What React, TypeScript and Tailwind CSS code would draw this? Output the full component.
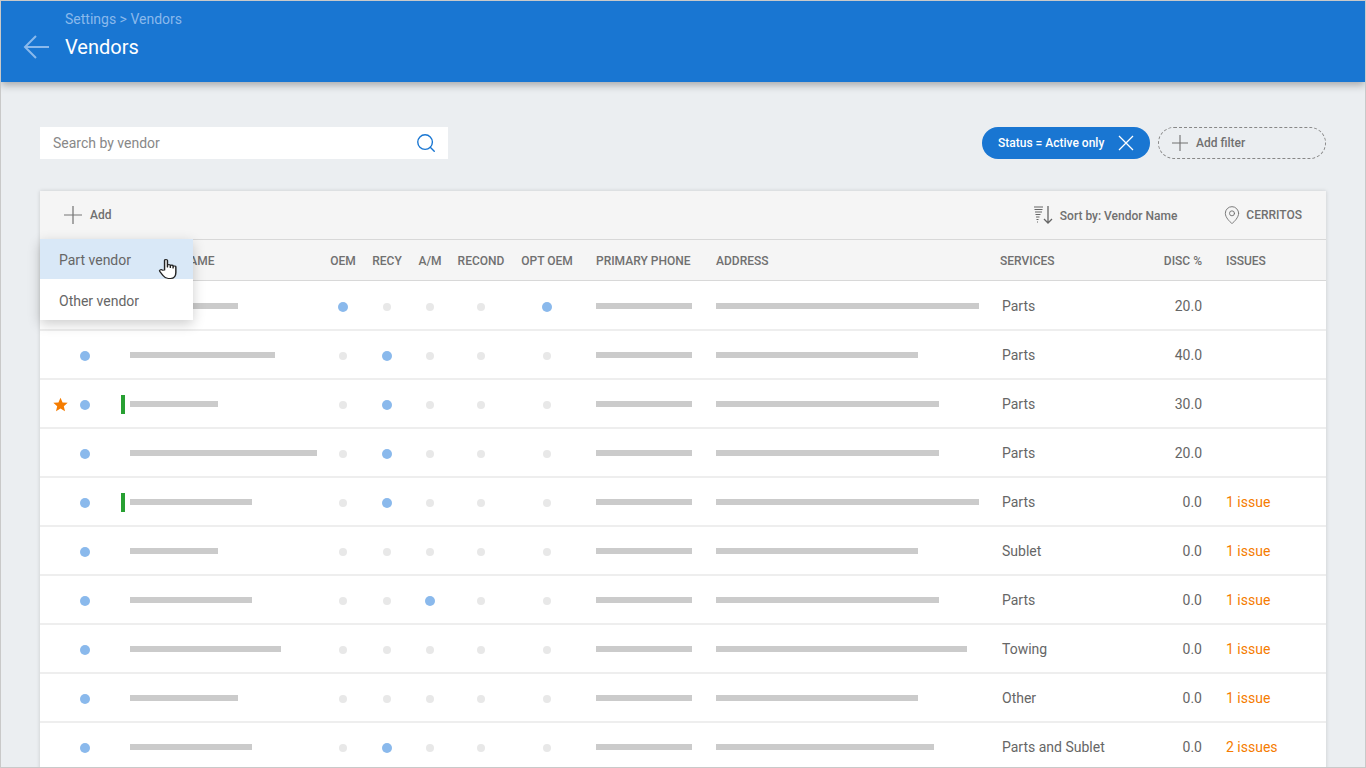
import { Search, MapPin } from "lucide-react"

interface Vendor {
  star?: boolean
  green?: boolean
  name: number
  addr: number
  on: string
  service: string
  disc: string
  issues?: string
}

const ROWS: Vendor[] = [
  { name: 108, addr: 263, on: "oem,opt", service: "Parts", disc: "20.0" },
  { name: 145, addr: 202, on: "recy", service: "Parts", disc: "40.0" },
  { star: true, green: true, name: 88, addr: 223, on: "recy", service: "Parts", disc: "30.0" },
  { name: 187, addr: 223, on: "recy", service: "Parts", disc: "20.0" },
  { green: true, name: 122, addr: 263, on: "recy", service: "Parts", disc: "0.0", issues: "1 issue" },
  { name: 88, addr: 202, on: "", service: "Sublet", disc: "0.0", issues: "1 issue" },
  { name: 122, addr: 223, on: "am", service: "Parts", disc: "0.0", issues: "1 issue" },
  { name: 151, addr: 251, on: "", service: "Towing", disc: "0.0", issues: "1 issue" },
  { name: 108, addr: 202, on: "", service: "Other", disc: "0.0", issues: "1 issue" },
  { name: 122, addr: 218, on: "recy", service: "Parts and Sublet", disc: "0.0", issues: "2 issues" },
]

const FLAGS = [
  { key: "oem", width: "w-[44px]" },
  { key: "recy", width: "w-[44px]" },
  { key: "am", width: "w-[42px]" },
  { key: "recond", width: "w-[60px]" },
  { key: "opt", width: "w-[72px]" },
]

function Dot({ on }: { on: boolean }) {
  return on ? (
    <span className="block h-[10px] w-[10px] rounded-full bg-[#8ab9ec]" />
  ) : (
    <span className="block h-[8px] w-[8px] rounded-full bg-[#e8e8e8]" />
  )
}

// plain thin cross, the artwork runs edge to edge
function PlusIcon({ size, className }: { size: number; className?: string }) {
  return (
    <svg width={size} height={size} viewBox="0 0 16 16" fill="none" stroke="currentColor" strokeWidth="1.100" className={className}>
      <path d="M8 0v16M0 8h16" />
    </svg>
  )
}

function CloseIcon({ className }: { className?: string }) {
  return (
    <svg width="16" height="16" viewBox="0 0 16 16" fill="none" stroke="currentColor" strokeWidth="1.300" className={className}>
      <path d="M1 1l14 14M15 1 1 15" />
    </svg>
  )
}

function SortIcon() {
  return (
    <svg width="20" height="20" viewBox="0 0 20 20" fill="none" stroke="#666" strokeWidth="1.200" className="ml-auto">
      <path d="M1 2h9M1.500 4.500h8M2 7h7M2.500 9.500h5M3 12h3.500M3.500 14.500h2M4 17h1" />
      <path d="M15 1v17M11 14l4 4 4-4" strokeWidth="1.300" />
    </svg>
  )
}

function HandCursor() {
  return (
    <svg width="21" height="22" viewBox="0 0 16 22" preserveAspectRatio="none" fill="#fff" stroke="#222" strokeWidth="1.100" strokeLinejoin="round">
      <path d="M5 12V2.600C5 1.100 7.200 1.100 7.200 2.600V9V7.400C7.200 6.100 9.400 6.100 9.400 7.400V9.500V8C9.400 6.800 11.500 6.800 11.500 8V10V8.800C11.500 7.700 13.600 7.700 13.600 8.800V14.500C13.600 17.500 12.500 20.500 9.500 20.500H7.800C5.800 20.500 4.800 19.200 3.800 17.500L1.400 13.500C.6 12.200 2.300 11 3.400 12.200Z" />
    </svg>
  )
}

export default function App() {
  return (
    <div
      className="relative h-[768px] w-[1366px] overflow-hidden border border-[#c9c9c9] bg-[#ebeef1] text-[#666]"
      style={{ fontFamily: "Roboto, sans-serif" }}
    >
      <header className="flex h-[81px] items-start bg-[#1976d2] shadow-[0_3px_8px_rgba(0,0,0,0.3)]">
        <svg className="ml-[22px] mt-[33px]" width="26" height="26" viewBox="0 0 26 26" fill="none" stroke="#8ab9ec" strokeWidth="2">
          <path d="M26 13H2M13 2 2 13l11 11" />
        </svg>
        <div className="ml-[16px] mt-[9px]">
          <div className="text-[14px] leading-[18px] text-[#8ab9ec]">Settings &gt; Vendors</div>
          <div className="mt-[6px] text-[20px] leading-[26px] text-white">Vendors</div>
        </div>
      </header>

      <div className="flex items-center justify-between pl-[39px] pr-[39px] pt-[45px]">
        <div className="flex h-[32px] w-[408px] items-center justify-between bg-white pl-[13px] pr-[11px]">
          <span className="text-[14px] text-[#888]">Search by vendor</span>
          <Search size={22} strokeWidth={1.5} className="text-[#1976d2]" />
        </div>
        <div className="flex items-center gap-[8px]">
          <div className="flex h-[32px] w-[168px] items-center rounded-full bg-[#1976d2] pl-[16px] text-[12px] font-medium text-white">
            Status = Active only
            <CloseIcon className="ml-[14px]" />
          </div>
          <div className="flex h-[32px] w-[168px] items-center rounded-full border border-dashed border-[#888] pl-[13px] text-[12px] font-medium text-[#707070]">
            <PlusIcon size={16} className="mr-[8px]" />
            Add filter
          </div>
        </div>
      </div>

      <div className="relative ml-[39px] mt-[32px] w-[1286px] bg-white shadow-[0_0_4px_rgba(0,0,0,0.15)]">
        <div className="flex h-[49px] items-center border-b border-[#d8d8d8] bg-[#f5f5f5] pl-[24px] pr-[24px] text-[12px] font-medium text-[#707070]">
          <PlusIcon size={18} className="mr-[8px] text-[#777]" />
          Add
          <SortIcon />
          <span className="ml-[7px] pt-[2px]">Sort by: Vendor Name</span>
          <MapPin size={20} strokeWidth={1.1} className="ml-[45px] mr-[4px]" />
          CERRITOS
        </div>

        <div className="flex h-[41px] items-center border-b border-[#d8d8d8] bg-[#f5f5f5] pl-[1px] pt-[2px] text-[12px] font-medium text-[#707070]">
          <div className="w-[280px] pl-[90px]">VENDOR NAME</div>
          <div className="w-[44px] text-center">OEM</div>
          <div className="w-[44px] text-center">RECY</div>
          <div className="w-[42px] text-center">A/M</div>
          <div className="w-[60px] text-center">RECOND</div>
          <div className="w-[72px] text-center">OPT OEM</div>
          <div className="w-[133px] pl-[13px]">PRIMARY PHONE</div>
          <div className="w-[284px]">ADDRESS</div>
          <div className="w-[140px]">SERVICES</div>
          <div className="w-[62px] text-right">DISC %</div>
          <div className="pl-[24px]">ISSUES</div>
        </div>

        <div className="pt-[1px]">
          {ROWS.map((row, i) => (
            <div key={i} className="flex h-[49px] items-center border-b-2 border-[#eeeeee] pl-[1px] pt-[2px] text-[14px]">
              <div className="flex w-[38px] justify-end pr-[11px]">
                {row.star && (
                  <svg width="15" height="15" viewBox="0 0 24 24" fill="#f57c00">
                    <path d="M12 1l3.300 7.600 8.200.7-6.200 5.400 1.900 8.100L12 18.500 4.800 22.800l1.900-8.100L.5 9.300l8.200-.7z" />
                  </svg>
                )}
              </div>
              <div className="flex w-[12px] justify-center pt-[1px]">
                <Dot on />
              </div>
              <div className="flex w-[230px] items-center pl-[30px]">
                <span className={row.green ? "block h-[19px] w-[4px] bg-[#28a032]" : "block h-[19px] w-[4px]"} />
                <span className="mb-[2px] ml-[5px] block h-[6px] bg-[#cbcbcb]" style={{ width: row.name }} />
              </div>
              {FLAGS.map((f) => (
                <div key={f.key} className={`flex justify-center pt-[1px] ${f.width}`}>
                  <Dot on={row.on.split(",").includes(f.key)} />
                </div>
              ))}
              <div className="w-[133px] pb-[2px] pl-[13px]">
                <span className="block h-[6px] w-[96px] bg-[#cbcbcb]" />
              </div>
              <div className="w-[284px] pb-[2px]">
                <span className="block h-[6px] bg-[#cbcbcb]" style={{ width: row.addr }} />
              </div>
              <div className="w-[140px] pl-[2px]">{row.service}</div>
              <div className="w-[62px] text-right">{row.disc}</div>
              <div className="pl-[24px] text-[#f57c00]">{row.issues}</div>
            </div>
          ))}
        </div>

        <div className="absolute left-0 top-[48px] w-[153px] bg-white text-[14px] shadow-[0_4px_12px_rgba(0,0,0,0.2)]">
          <div className="flex h-[40px] items-center bg-[#d9e8f7] pl-[19px] pt-[2px]">Part vendor</div>
          <div className="flex h-[41px] items-center pl-[19px] pt-[3px]">Other vendor</div>
          <div className="absolute left-[118px] top-[19px]">
            <HandCursor />
          </div>
        </div>
      </div>
    </div>
  )
}
